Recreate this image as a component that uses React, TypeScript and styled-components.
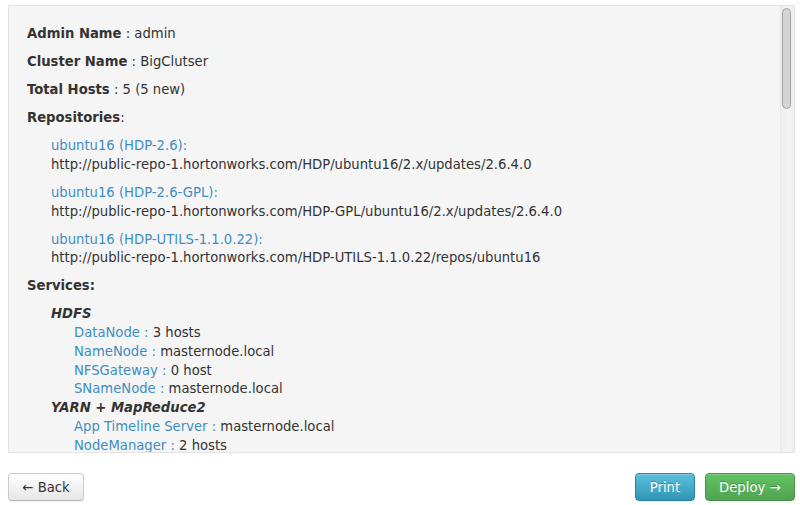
import React from "react";
import styled, { createGlobalStyle } from "styled-components";

const Global = createGlobalStyle`
  html, body { margin: 0; padding: 0; background: #ffffff; }
  body {
    font-family: "DejaVu Sans", "Liberation Sans", sans-serif;
    font-size: 13.2px;
    color: #333333;
  }
`;

const Page = styled.div`
  width: 800px;
  height: 505px;
  box-sizing: border-box;
  padding: 5px 5px 0 8px;
  display: flex;
  flex-direction: column;
`;

const WellFrame = styled.div`
  position: relative;
  height: 448px;
  box-sizing: border-box;
  background: #f5f5f5;
  border: 1px solid #e3e3e3;
  border-radius: 2px;
  overflow: hidden;
`;

const Scroller = styled.div`
  height: 100%;
  overflow-y: auto;
  scrollbar-width: none;
  &::-webkit-scrollbar { display: none; }
`;

const Track = styled.div`
  position: absolute;
  top: 0;
  right: 0;
  bottom: 0;
  width: 14px;
  background: linear-gradient(to right, #e6e6e6 0, #efefef 2px, #f3f3f3 10px, #ececec 14px);
`;

const Thumb = styled.div`
  position: absolute;
  top: 2px;
  left: 2px;
  width: 9px;
  height: 101px;
  box-sizing: border-box;
  background: #d4d4d4;
  border: 1px solid #a3a3a3;
  border-radius: 5px;
`;

const Content = styled.div`
  padding: 19px 33px 0 18px;
  line-height: 18.75px;
`;

const Row = styled.p`
  margin: 0 0 9.25px 0;
`;

const Label = styled.b`
  font-weight: bold;
`;

const RepoList = styled.div`
  padding-left: 24px;
`;

const Repo = styled.div`
  margin-bottom: 9.25px;
`;

const Link = styled.div`
  color: #3f8dc1;
`;

const ServiceList = styled.div`
  padding-left: 24px;
`;

const ServiceName = styled.div`
  font-weight: bold;
  font-style: italic;
`;

const ComponentRow = styled.div`
  padding-left: 23px;
`;

const CompName = styled.span`
  color: #3f8dc1;
`;

const Footer = styled.div`
  display: flex;
  align-items: center;
  justify-content: space-between;
  margin-top: 20px;
`;

const Actions = styled.div`
  display: flex;
  gap: 10px;
`;

const Button = styled.button<{ $variant?: "default" | "info" | "success" }>`
  height: 28px;
  box-sizing: border-box;
  padding: 0 13.5px;
  font-family: "DejaVu Sans", "Liberation Sans", sans-serif;
  font-size: 13.2px;
  border-radius: 4px;
  cursor: pointer;
  white-space: nowrap;
  ${({ $variant }) =>
    $variant === "info"
      ? `
    color: #ffffff;
    background: linear-gradient(to bottom, #5bc0de, #2f96b4);
    border: 1px solid #2a85a0;
    text-shadow: 0 -1px 0 rgba(0,0,0,0.25);
  `
      : $variant === "success"
      ? `
    color: #ffffff;
    background: linear-gradient(to bottom, #62c462, #51a351);
    border: 1px solid #47914a;
    text-shadow: 0 -1px 0 rgba(0,0,0,0.25);
  `
      : `
    color: #333333;
    background: linear-gradient(to bottom, #ffffff, #e6e6e6);
    border: 1px solid #cccccc;
    border-bottom-color: #b3b3b3;
  `}
  box-shadow: inset 0 1px 0 rgba(255,255,255,0.2), 0 1px 2px rgba(0,0,0,0.05);
`;

const repos = [
  ["ubuntu16 (HDP-2.6):", "http://public-repo-1.hortonworks.com/HDP/ubuntu16/2.x/updates/2.6.4.0"],
  ["ubuntu16 (HDP-2.6-GPL):", "http://public-repo-1.hortonworks.com/HDP-GPL/ubuntu16/2.x/updates/2.6.4.0"],
  ["ubuntu16 (HDP-UTILS-1.1.0.22):", "http://public-repo-1.hortonworks.com/HDP-UTILS-1.1.0.22/repos/ubuntu16"],
];

const services: { name: string; comps: [string, string][] }[] = [
  {
    name: "HDFS",
    comps: [
      ["DataNode", "3 hosts"],
      ["NameNode", "masternode.local"],
      ["NFSGateway", "0 host"],
      ["SNameNode", "masternode.local"],
    ],
  },
  {
    name: "YARN + MapReduce2",
    comps: [
      ["App Timeline Server", "masternode.local"],
      ["NodeManager", "2 hosts"],
    ],
  },
];

export default function App() {
  return (
    <>
      <Global />
      <Page>
        <WellFrame>
          <Scroller>
            <Content>
              <Row>
                <Label>Admin Name</Label> : admin
              </Row>
              <Row>
                <Label>Cluster Name</Label> : BigClutser
              </Row>
              <Row>
                <Label>Total Hosts</Label> : 5 (5 new)
              </Row>
              <Row>
                <Label>Repositories</Label>:
              </Row>
              <RepoList>
                {repos.map(([name, url]) => (
                  <Repo key={name}>
                    <Link>{name}</Link>
                    <div>{url}</div>
                  </Repo>
                ))}
              </RepoList>
              <Row>
                <Label>Services:</Label>
              </Row>
              <ServiceList>
                {services.map((s) => (
                  <div key={s.name}>
                    <ServiceName>{s.name}</ServiceName>
                    {s.comps.map(([c, v]) => (
                      <ComponentRow key={c}>
                        <CompName>{c} : </CompName>
                        {v}
                      </ComponentRow>
                    ))}
                  </div>
                ))}
              </ServiceList>
            </Content>
          </Scroller>
          <Track>
            <Thumb />
          </Track>
        </WellFrame>
        <Footer>
          <Button>← Back</Button>
          <Actions>
            <Button $variant="info">Print</Button>
            <Button $variant="success">Deploy →</Button>
          </Actions>
        </Footer>
      </Page>
    </>
  );
}
